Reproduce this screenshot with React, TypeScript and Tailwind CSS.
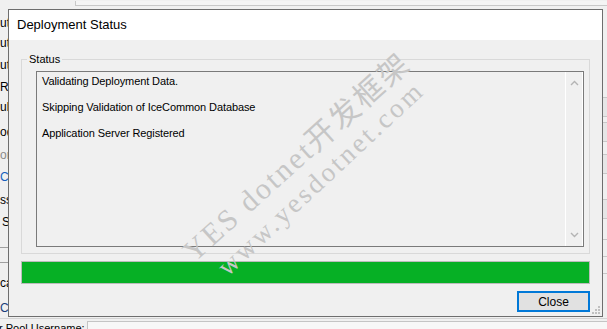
import React from 'react';

const logLines = [
  'Validating Deployment Data.',
  'Skipping Validation of IceCommon Database',
  'Application Server Registered',
];

// fragments of the form behind the dialog, cut off by the window edge
const sideLabels = [
  { text: 'utput Folder', cls: 'mt-[4px]' },
  { text: 'utput Name', cls: 'mt-0' },
  { text: 'ut Dir', cls: 'mt-[2px]' },
  { text: 'Repository', cls: 'mt-[2px]' },
  { text: 'ublish', cls: 'mt-0' },
  { text: 'ode', cls: 'mt-[5px]' },
  { text: 'ort', cls: 'mt-[3px] text-[#8a8a8a]' },
  { text: 'Custom', cls: 'mt-[2px] text-[#1560bd]' },
  { text: 'ssword', cls: 'mt-[3px]' },
  { text: ' Site', cls: 'mt-[2px] pl-[2px]' },
];

function ChevronUp() {
  return (
    <svg width="9" height="6" viewBox="0 0 9 6" fill="none">
      <path d="M1 5 L4.5 1.5 L8 5" stroke="#b4b4b4" strokeWidth="1.4" />
    </svg>
  );
}

function ChevronDown() {
  return (
    <svg width="9" height="6" viewBox="0 0 9 6" fill="none">
      <path d="M1 1 L4.5 4.5 L8 1" stroke="#b4b4b4" strokeWidth="1.4" />
    </svg>
  );
}

function Grip() {
  return (
    <svg width="9" height="9" viewBox="0 0 9 9">
      <rect x="6" y="0" width="2" height="2" fill="#c0c0c0" />
      <rect x="3" y="3" width="2" height="2" fill="#c0c0c0" />
      <rect x="6" y="3" width="2" height="2" fill="#c0c0c0" />
      <rect x="0" y="6" width="2" height="2" fill="#c0c0c0" />
      <rect x="3" y="6" width="2" height="2" fill="#c0c0c0" />
      <rect x="6" y="6" width="2" height="2" fill="#c0c0c0" />
    </svg>
  );
}

export default function App() {
  return (
    <div className="relative w-[607px] h-[329px] overflow-hidden bg-[#f0f0f0] text-[12px] text-black font-['Liberation_Sans',Arial,sans-serif]">
      {/* Background form */}
      <div className="flex flex-col h-full">
        <div className="h-[9px] flex shrink-0">
          <div className="w-[75px] relative overflow-hidden">
            <span className="absolute -top-[13px] left-0 whitespace-nowrap">Active Directory:</span>
          </div>
          <div className="flex-1 border-l border-b border-[#c8c8c8] bg-[#f4f4f4] mt-[1px] mb-[3px]"></div>
        </div>
        <div className="flex flex-1">
          <div className="w-[30px] flex flex-col whitespace-nowrap">
            {sideLabels.map((l) => (
              <div key={l.text} className={`h-[20px] leading-[20px] ${l.cls}`}>{l.text}</div>
            ))}
            <div className="mt-[15px] h-px bg-[#a0a0a0]"></div>
            <div className="mt-[14px] h-px bg-[#a0a0a0]"></div>
            <div className="mt-[10px] h-[20px] leading-[20px]">cation</div>
            <div className="mt-[5px] h-[20px] leading-[20px] text-[#1a3e7a]">Custom</div>
          </div>
          <div className="flex-1"></div>
          <div className="w-[10px] flex flex-col">
            <div className="mt-[88px] h-[20px] border-y border-[#c8c8c8] bg-[#e6e6e6]"></div>
            <div className="mt-[5px] h-[20px] border-y border-[#c8c8c8] bg-[#e6e6e6]"></div>
            <div className="mt-[12px] h-[20px] border-y border-[#c8c8c8] bg-[#e6e6e6]"></div>
            <div className="mt-[25px] h-[20px] border-y border-[#c8c8c8] bg-[#e6e6e6]"></div>
            <div className="mt-[20px] h-px bg-[#c8c8c8]"></div>
            <div className="mt-[16px] h-px bg-[#c8c8c8]"></div>
            <div className="mt-[16px] h-px bg-[#c8c8c8]"></div>
          </div>
        </div>
        <div className="h-[12px] flex shrink-0 border-t border-[#d4d4d4]">
          <div className="w-[87px] relative overflow-hidden">
            <span className="absolute top-[2px] -left-[1px] whitespace-nowrap leading-[14px] text-[11px]">r Pool Username:</span>
          </div>
          <div className="flex-1 mt-[2px] border-l border-t border-[#c4c4c4] bg-[#f7f7f7]"></div>
        </div>
      </div>

      {/* Dialog window */}
      <div className="absolute left-[8px] top-[9px] w-[595px] h-[308px] border border-[#6e6e6e] bg-[#f0f0f0] flex flex-col">
        <div className="h-[30px] bg-white flex items-center pl-[8px] text-[13px] shrink-0">Deployment Status</div>
        <div className="flex-1 flex flex-col px-[12px] pt-[11px] relative">
          <fieldset className="border border-[#d9d9d9] pl-[14px] pr-[5px] pb-[6px] pt-[4px]">
            <legend className="-ml-[9px] px-[2px] leading-[16px] text-[11px]">Status</legend>
            <div className="h-[176px] border border-[#7a7a7a] flex">
              <div className="flex-1 pl-[5px] pt-[3px] leading-[13px] text-[11px] tracking-[-0.1px]">
                {logLines.map((line) => (
                  <div key={line} className="mb-[13px]">{line}</div>
                ))}
              </div>
              <div className="w-[18px] border-x border-white flex flex-col items-center justify-between py-[8px]">
                <ChevronUp />
                <ChevronDown />
              </div>
            </div>
          </fieldset>
          <div className="mt-[7px] h-[23px] border border-[#bcbcbc] bg-[#e6e6e6]">
            <div className="h-full w-full bg-[#06b025]"></div>
          </div>
          <div className="mt-[7px] flex justify-end">
            <button className="w-[73px] h-[21px] border-2 border-[#0078d7] bg-[#e1e1e1] text-[12px] leading-[16px]">Close</button>
          </div>
          <div className="absolute right-[1px] bottom-[1px]">
            <Grip />
          </div>
        </div>
      </div>

      {/* Watermark */}
      <div className="pointer-events-none absolute left-[197px] top-[238px] origin-bottom-left -rotate-[42deg] whitespace-nowrap text-[30px] leading-[28px] tracking-[2.5px] text-[#c6c6c6] font-['Liberation_Serif','Noto_Sans_CJK_SC',serif]">
        YES dotnet开发框架
      </div>
      <div className="pointer-events-none absolute left-[231px] top-[253px] origin-bottom-left -rotate-[43deg] whitespace-nowrap text-[27px] leading-[28px] tracking-[3px] text-[#c6c6c6] font-['Liberation_Serif',serif]">
        www.yesdotnet.com
      </div>
    </div>
  );
}
